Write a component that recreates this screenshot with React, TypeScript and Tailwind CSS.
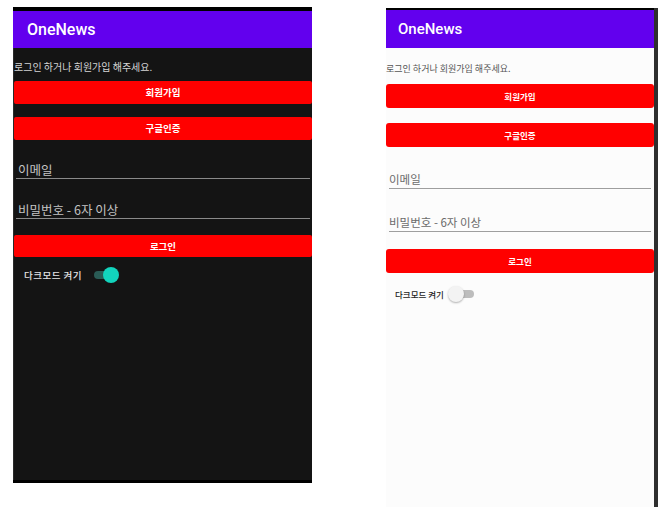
import React from "react";

const kr = { fontFamily: '"Noto Sans CJK KR", "Noto Sans", sans-serif' };
const latin = { fontFamily: 'Roboto, "Noto Sans", sans-serif' };

const DarkPhone = () => {
  return (
    <div className="mt-[7px] ml-[13px] flex h-[476px] w-[299px] flex-col bg-[#141414]" style={kr}>
      <div className="h-[4px] bg-black" />
      <header className="flex h-[37px] items-center bg-[#6200ee] pl-[14px]">
        <h1 className="text-[16px] font-medium text-white" style={latin}>
          OneNews
        </h1>
      </header>
      <div className="flex flex-1 flex-col border-l border-[#2a2a2a]">
        <p className="mt-[13px] text-[10px] leading-[12px] text-[#d4d4d4]">
          로그인 하거나 회원가입 해주세요.
        </p>
        <button className="mt-[8px] h-[23px] rounded-[2px] bg-[#ff0000] text-[9.5px] font-bold text-white">
          회원가입
        </button>
        <button className="mt-[13px] h-[23px] rounded-[2px] bg-[#ff0000] text-[9.5px] font-bold text-white">
          구글인증
        </button>
        <div className="mx-[2px] mt-[22px] h-[17px] border-b-[1.5px] border-[#8a8a8a] pl-[2px] text-[12.5px] leading-[15px] text-[#c4c4c4]">
          이메일
        </div>
        <div className="mx-[2px] mt-[23px] h-[17px] border-b-[1.5px] border-[#8a8a8a] pl-[2px] text-[12.5px] leading-[15px] text-[#c4c4c4]">
          비밀번호 - 6자 이상
        </div>
        <button className="mt-[16px] h-[22px] rounded-[2px] bg-[#ff0000] text-[9.5px] font-bold text-white">
          로그인
        </button>
        <div className="mt-[10px] flex items-center pl-[10px]">
          <span className="text-[9.5px] font-medium tracking-[0.5px] text-[#e6e6e6]">다크모드 켜기</span>
          <div className="relative ml-[12px] h-[16px] w-[25px]">
            <div className="absolute top-[4px] left-0 h-[8px] w-[22px] rounded-full bg-[#2a5b55]" />
            <div className="absolute top-0 right-0 h-[16px] w-[16px] rounded-full bg-[#12d4bd]" />
          </div>
        </div>
        <div className="flex-1" />
      </div>
      <div className="h-[3px] bg-black" />
    </div>
  );
};

const LightPhone = () => {
  return (
    <div className="mt-[8px] ml-[74px] flex h-[499px] w-[272px] border-r-[4px] border-[#2f2f2f] bg-[#fcfcfc]" style={kr}>
      <div className="flex flex-1 flex-col">
        <div className="h-[2px] bg-black" />
        <header className="flex h-[38px] items-center bg-[#6200ee] pl-[12px]">
          <h1 className="text-[15px] font-medium text-white" style={latin}>
            OneNews
          </h1>
        </header>
        <p className="mt-[15px] text-[9px] leading-[12px] text-[#555555]">
          로그인 하거나 회원가입 해주세요.
        </p>
        <button className="mt-[9px] h-[24px] rounded-[3px] bg-[#ff0000] text-[8.5px] font-bold text-white">
          회원가입
        </button>
        <button className="mt-[15px] h-[24px] rounded-[3px] bg-[#ff0000] text-[8.5px] font-bold text-white">
          구글인증
        </button>
        <div className="mx-[3px] mt-[25px] h-[17px] border-b-[1.5px] border-[#9e9e9e] text-[11.5px] leading-[15px] text-[#6b6b6b]">
          이메일
        </div>
        <div className="mx-[3px] mt-[26px] h-[17px] border-b-[1.5px] border-[#9e9e9e] text-[11.5px] leading-[15px] text-[#6b6b6b]">
          비밀번호 - 6자 이상
        </div>
        <button className="mt-[17px] h-[24px] rounded-[3px] bg-[#ff0000] text-[8.5px] font-bold text-white">
          로그인
        </button>
        <div className="mt-[13px] flex items-center pl-[9px]">
          <span className="text-[8.5px] font-medium text-[#222222]">다크모드 켜기</span>
          <div className="relative ml-[4px] h-[16px] w-[26px]">
            <div className="absolute top-[4px] right-0 h-[8px] w-[20px] rounded-full bg-[#bdbdbd]" />
            <div className="absolute top-0 left-0 h-[16px] w-[16px] rounded-full bg-[#f3f3f3] shadow-[0_1px_2px_rgba(0,0,0,0.3)]" />
          </div>
        </div>
      </div>
    </div>
  );
};

export default function App() {
  return (
    <div className="flex h-[517px] w-[668px] items-start bg-white">
      <DarkPhone />
      <LightPhone />
    </div>
  );
}
